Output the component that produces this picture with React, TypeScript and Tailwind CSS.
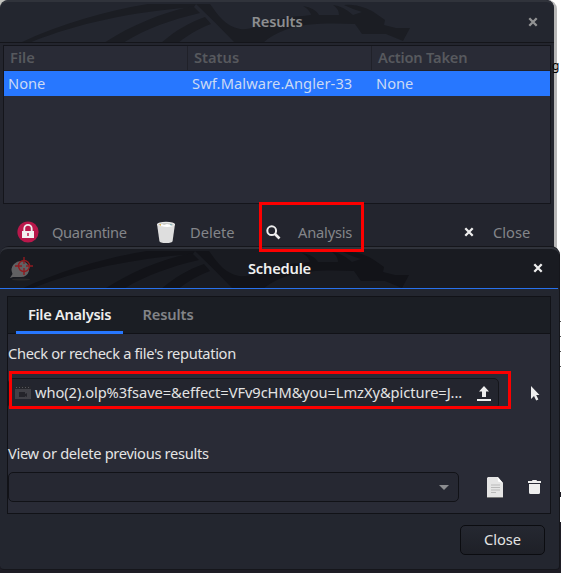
import React from "react";

function Dragon({ fill, className }: { fill: string; className: string }) {
  return (
    <svg className={className} width="440" height="41" viewBox="0 1 440 41" fill={fill}>
      <path d="M20 42C60 23 105 10 148 3H196L194 6C130 11 75 23 29 42Z" />
      <path d="M104 42C130 25 160 12 193 5L200 12C170 19 145 28 123 42Z" />
      <path d="M161 42C175 30 188 22 205 16L211 23C198 28 188 34 178 42Z" />
      <path d="M196 3H210C218 14 225 25 240 28C256 30 270 16 303 15L311 14Q310 9 303 5Q315 7 319 14L339 14Q339 8 333 4Q343 5 353 14L362 11Q352 8 344 4Q357 3 362 8L355 4Q368 7 375 12L385 19L384 24L396 27L410 27L403 40L386 33L362 33L355 23C330 22 302 22 285 29Q270 35 263 42H235Q216 22 196 3Z" />
    </svg>
  );
}

function CloseX({ color, className = "" }: { color: string; className?: string }) {
  return (
    <svg className={className} width="10" height="10" viewBox="0 0 10 10" stroke={color} strokeWidth="2.3">
      <path d="M1.3 1.3L8.7 8.7M8.7 1.3L1.3 8.7" />
    </svg>
  );
}

function LockIcon() {
  return (
    <svg width="22" height="22" viewBox="0 0 22 22">
      <circle cx="11" cy="11" r="10.6" fill="#b9184b" />
      <path d="M7.3 10V7.5a3.7 3.7 0 0 1 7.4 0V10" fill="none" stroke="#eee" strokeWidth="1.8" />
      <path d="M5 10h12v7H5z" fill="#f2f2f2" />
      <path d="M10.3 12h1.4v3h-1.4z" fill="#b9184b" />
    </svg>
  );
}

function BinIcon() {
  return (
    <svg width="20" height="23" viewBox="0 0 20 23">
      <path d="M1 3L3.4 20Q3.8 22 10 22T16.6 20L19 3Z" fill="#dedede" />
      <ellipse cx="10" cy="3.4" rx="9" ry="2.7" fill="#e9e9e9" />
      <ellipse cx="10" cy="3.8" rx="7.6" ry="1.9" fill="#c9cac5" />
      <path d="M3 4l3-1 2 1 3-1 4 1 2 1q-5 2-13 0z" fill="#fff" />
      <path d="M3 3.6l2-.6v2z" fill="#d7ad42" />
      <path d="M14 3l2 .8-1 1z" fill="#4e9caa" />
    </svg>
  );
}

function SearchIcon() {
  return (
    <svg width="15" height="15" viewBox="0 0 15 15" fill="none" stroke="#eee">
      <circle cx="5.7" cy="5.7" r="4.4" strokeWidth="2" />
      <path d="M9 9L13.5 13.5" strokeWidth="2.7" />
    </svg>
  );
}

function ScanIcon() {
  return (
    <svg width="24" height="24" viewBox="0 0 24 24" className="ml-[9px]">
      <ellipse cx="12" cy="22.5" rx="9" ry="1" fill="#29292b" />
      <path d="M1 21L3.5 17Q1 11 5 7Q10 2 16 5Q21 8 20 14Q18 20 12 20H4Z" fill="#616163" />
      <g fill="none" stroke="#901b20">
        <circle cx="15" cy="9" r="5.5" strokeWidth="1.4" />
        <path d="M15 0V7M15 11V18M6 9H13M17 9H24" strokeWidth="1.4" />
      </g>
    </svg>
  );
}

function FilmIcon() {
  return (
    <svg width="16" height="14" viewBox="0 0 16 14">
      <path d="M0 1h16v12H0z" fill="#414147" />
      <path d="M0 0h16v3H0z" fill="#25262c" />
      <path d="M1 1.5h14" stroke="#55565b" strokeDasharray="1 2" />
      <path d="M4 6h6v5H4zM10 8l2-1v4l-2-1z" fill="#24242a" />
    </svg>
  );
}

function UploadIcon() {
  return (
    <svg width="14" height="15" viewBox="0 0 14 15" fill="#eee">
      <path d="M0 13h14v2H0zM7 0L12 5.5H9V11H5V5.5H2Z" />
    </svg>
  );
}

function PointerIcon() {
  return (
    <svg width="9" height="15" viewBox="0 0 9 15" fill="#eee">
      <path d="M0 0L8.5 9H5.2L7.4 13.4L5.2 14.5L3 10L0 13Z" />
    </svg>
  );
}

function DocumentIcon() {
  return (
    <svg width="16" height="21" viewBox="0 0 16 21">
      <path d="M1 0H11L16 6V20H0V1Z" fill="#e5e5e5" />
      <path d="M10.5 0L16 6L11 4.5Z" fill="#fff" />
      <path d="M4 8H13M4 10.5H13M4 13H13M4 15.5H9" stroke="#b9b9b9" />
      <path d="M0 20H16V21H0Z" fill="#777" />
    </svg>
  );
}

function TrashIcon() {
  return (
    <svg width="13" height="14" viewBox="0 0 13 14" fill="#eee">
      <path d="M0 1H4Q4 0 5 0H8Q9 0 9 1H13V3H0ZM1 4H12V12.5Q12 14 10.5 14H2.5Q1 14 1 12.5Z" />
    </svg>
  );
}

function ResultsWindow() {
  return (
    <section className="absolute left-0 top-0 flex h-[262px] w-[557px] flex-col rounded-t-[9px] border-r-[3px] border-[#b8b8b8] bg-[#23252e] pl-[3px] pr-[3px]">
      <header className="relative -ml-[3px] -mr-[3px] flex h-[43px] shrink-0 items-center justify-center overflow-hidden rounded-t-[8px] border-b border-t-2 border-b-[#14151a] border-t-[#30333b] bg-[#23262f] pb-[2px]">
        <Dragon fill="#1b1d23" className="absolute left-0 top-0" />
        <h1 className="relative font-semibold tracking-[-0.1px] text-[#8d8e90]">Results</h1>
        <CloseX color="#929394" className="absolute right-[16px] top-[15px]" />
      </header>
      <div className="mt-[2px] flex h-[159px] shrink-0 flex-col border border-[#14151b] bg-[#292b36]">
        <div className="flex h-[25px] shrink-0 items-start border-b border-[#202129] font-semibold leading-[23px] text-[#57595e]">
          <span className="h-full w-[184px] border-r border-[#202129] pl-[6px]">File</span>
          <span className="h-full w-[184px] border-r border-[#202129] pl-[6px]">Status</span>
          <span className="pl-[6px] tracking-[-0.2px]">Action Taken</span>
        </div>
        <div className="flex h-[25px] shrink-0 items-center bg-[#2777ff] pb-[2px] text-[#cbdaf4]">
          <span className="w-[184px] pl-[4px]">None</span>
          <span className="w-[184px] pl-[4px] tracking-[0.1px]">Swf.Malware.Angler-33</span>
          <span className="pl-[4px]">None</span>
        </div>
      </div>
      <div className="mt-[10px] flex h-[36px] items-center text-[#84868a]">
        <div className="flex w-[153px] items-center gap-[13px] pl-[14px] tracking-[-0.35px]"><LockIcon />Quarantine</div>
        <div className="flex w-[107px] items-center gap-[14px]"><BinIcon />Delete</div>
        <div className="flex w-[198px] items-center gap-[17px] pl-[3px] tracking-[-0.2px]"><SearchIcon />Analysis</div>
        <div className="flex items-center gap-[19px] pl-[3px]"><CloseX color="#eee" />Close</div>
      </div>
    </section>
  );
}

function ScheduleWindow() {
  return (
    <section className="absolute left-0 top-[246px] flex h-[324px] w-[560px] flex-col rounded-b-[4px] rounded-t-[9px] border border-l-0 border-[#15161b] bg-[#23262f]">
      <header className="relative flex h-[41px] shrink-0 items-center overflow-hidden rounded-t-[8px] border-t-2 border-[#30333b] bg-[#191b21]">
        <Dragon fill="#121318" className="absolute -left-px top-0" />
        <div className="relative"><ScanIcon /></div>
        <h2 className="absolute inset-x-0 top-[9px] text-center font-semibold tracking-[-0.2px] text-[#f0f0f0]">Schedule</h2>
        <CloseX color="#eee" className="absolute right-[16px] top-[14px]" />
      </header>
      <div className="h-px w-[558px] shrink-0 bg-[#2871ec]" />
      <div className="ml-[7px] mt-[7px] flex h-[218px] w-[544px] shrink-0 flex-col border border-[#111217] bg-[#292b36]">
        <nav className="flex h-[37px] shrink-0 border-b border-[#111217] bg-[#1b1e24] pl-[8px] font-semibold">
          <span className="h-[37px] w-[107px] border-b-[3px] border-[#2777ff] text-center leading-[34px] tracking-[-0.3px] text-[#eee]">File Analysis</span>
          <span className="w-[90px] text-center leading-[34px] tracking-[-0.1px] text-[#828488]">Results</span>
        </nav>
        <p className="mt-[9px] h-[20px] leading-[20px] tracking-[-0.34px]">Check or recheck a file&apos;s reputation</p>
        <div className="mt-[15px] flex h-[30px] items-center">
          <div className="flex h-[31px] w-[491px] items-center rounded-[5px] border border-[#14151a] bg-[#23252e] pl-[6px] pr-[7px]">
            <FilmIcon />
            <span className="ml-[4px] w-[442px] whitespace-nowrap pb-[2px] tracking-[-0.06px]">who(2).olp%3fsave=&amp;effect=VFv9cHM&amp;you=LmzXy&amp;picture=J...</span>
            <UploadIcon />
          </div>
          <div className="ml-[32px]"><PointerIcon /></div>
        </div>
        <p className="mt-[35px] h-[20px] leading-[20px] tracking-[-0.31px]">View or delete previous results</p>
        <div className="mt-[9px] flex h-[30px] items-center">
          <div className="flex h-[30px] w-[451px] items-center justify-end rounded-[5px] border border-[#111217] bg-[#262832] pr-[9px]">
            <svg width="10" height="5" viewBox="0 0 10 5"><path d="M0 0H10L5 5Z" fill="#8c8d90" /></svg>
          </div>
          <div className="ml-[28px]"><DocumentIcon /></div>
          <div className="ml-[25px]"><TrashIcon /></div>
        </div>
      </div>
      <button className="ml-[460px] mt-[11px] h-[30px] w-[85px] shrink-0 rounded-[5px] border border-[#0b0c10] bg-gradient-to-b from-[#252831] to-[#1e2027] pb-[2px]">Close</button>
    </section>
  );
}

export default function App() {
  return (
    <main className="relative h-[573px] w-[561px] overflow-hidden bg-white font-['Noto_Sans','Open_Sans',sans-serif] text-[14.67px] leading-[20px] text-[#e4e4e4]">
      <div className="absolute bottom-0 right-0 top-[522px] w-full bg-[#1e1d25]" />
      <div className="absolute left-[559px] top-[492px] h-[5px] w-[2px] bg-[#1e1d25]" />
      <div className="absolute left-0 top-0 h-[9px] w-[24px] bg-[#c2c3be]" />
      <div className="absolute left-[24px] top-0 h-[2px] w-[505px] bg-[#1e1f25]" />
      <ResultsWindow />
      <div className="absolute left-[552px] top-[56px] text-[12px] text-black">g</div>
      <ScheduleWindow />
      <div className="absolute left-[560px] top-[321px] flex flex-col gap-[14px]">
        <i className="h-px w-px bg-[#555]" />
        <i className="h-px w-px bg-[#555]" />
        <i className="h-px w-px bg-[#555]" />
        <i className="h-px w-px bg-[#555]" />
      </div>
      <div className="absolute left-[259px] top-[202px] h-[50px] w-[105px] border-[3px] border-[#fc0000]" />
      <div className="absolute left-[9px] top-[371px] h-[38px] w-[502px] border-[3px] border-[#fc0000]" />
    </main>
  );
}
